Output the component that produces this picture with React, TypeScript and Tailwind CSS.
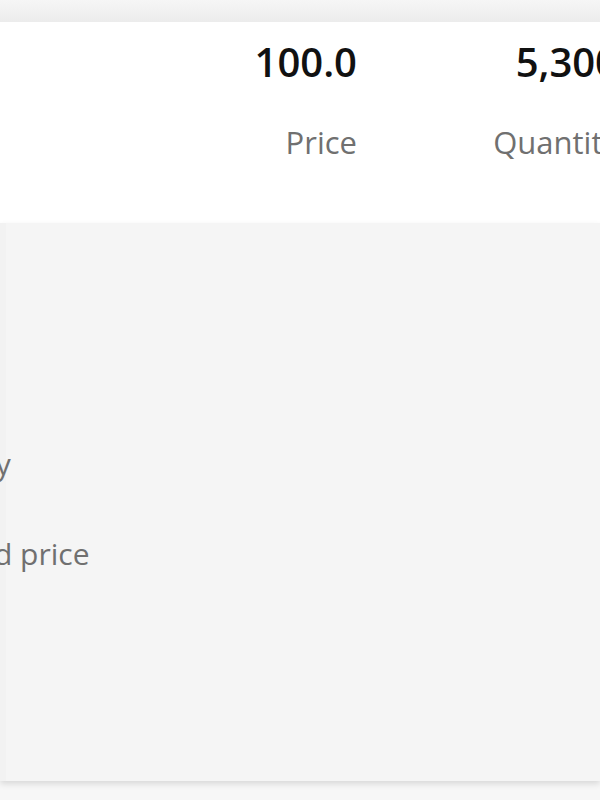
export default function App() {
  return (
    <div className="relative h-[800px] w-[600px] overflow-hidden bg-[#f7f7f7] font-['Open_Sans',sans-serif]">
      <div className="h-[22px] bg-gradient-to-b from-[#f6f6f6] to-[#ececec]" />

      {/* summary card */}
      <div className="flex h-[201px] w-[680px] bg-white">
        <div className="ml-[99px] flex w-[258px] flex-col items-end pt-[20px]">
          <span className="text-[40px] font-semibold leading-none text-[#111]">100.0</span>
          <span className="mt-[45px] text-[31px] leading-none text-[#707070]">Price</span>
        </div>
        <div className="flex w-[261px] flex-col items-end pt-[20px]">
          <span className="text-[40px] font-semibold leading-none text-[#111]">5,300</span>
          <span className="mt-[45px] text-[31px] leading-none text-[#707070]">Quantity</span>
        </div>
      </div>

      {/* detail panel */}
      <div className="h-[558px] border-l-[6px] border-[#f2f2f2] bg-[#f5f5f5] pt-[226px] shadow-[0_3px_6px_rgba(0,0,0,0.12)]">
        <div className="ml-[-116px] flex flex-col gap-[60px]">
          <span className="whitespace-nowrap text-[30px] leading-none text-[#707070]">Quantity</span>
          <span className="whitespace-nowrap text-[30px] leading-none text-[#707070]">Matched price</span>
        </div>
      </div>
    </div>
  );
}
